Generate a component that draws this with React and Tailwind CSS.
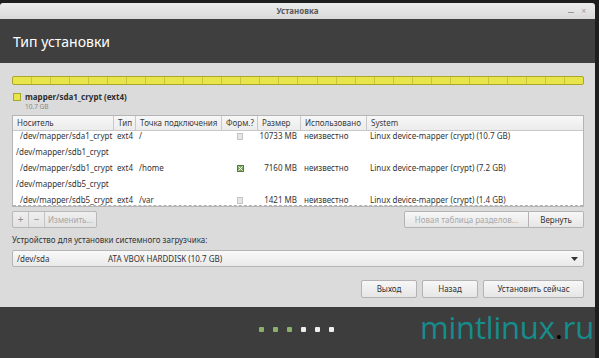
import React from 'react'

const font = { fontFamily: '"Noto Sans", "Open Sans", sans-serif' }

const cols = [
    { name: 'Носитель', w: 'w-[101px]' },
    { name: 'Тип', w: 'w-[22px]' },
    { name: 'Точка подключения', w: 'w-[86px]' },
    { name: 'Форм.?', w: 'w-[36px]' },
    { name: 'Размер', w: 'w-[43px]' },
    { name: 'Использовано', w: 'w-[66px]' },
    { name: 'System', w: 'flex-1' },
]

const rows = [
    { dev: '/dev/mapper/sda1_crypt', type: 'ext4', mount: '/', fmt: false, size: '10733 MB', used: 'неизвестно', sys: 'Linux device-mapper (crypt) (10.7 GB)' },
    { parent: '/dev/mapper/sdb1_crypt' },
    { dev: '/dev/mapper/sdb1_crypt', type: 'ext4', mount: '/home', fmt: true, size: '7160 MB', used: 'неизвестно', sys: 'Linux device-mapper (crypt) (7.2 GB)' },
    { parent: '/dev/mapper/sdb5_crypt' },
    { dev: '/dev/mapper/sdb5_crypt', type: 'ext4', mount: '/var', fmt: false, size: '1421 MB', used: 'неизвестно', sys: 'Linux device-mapper (crypt) (1.4 GB)' },
]

function Check({ on }) {
    if (on) {
        return (
            <span className="w-[7px] h-[7px] bg-[#7fa862] border border-[#567d3c] flex items-center justify-center">
                <svg width="5" height="5" viewBox="0 0 5 5">
                    <path d="M0.5 0.5 L4.5 4.5 M4.5 0.5 L0.5 4.5" stroke="#fff" strokeWidth="1" />
                </svg>
            </span>
        )
    }
    return <span className="w-[6px] h-[7px] bg-[#e6e6e6] border border-[#c4c4c4]" />
}

function Btn({ children, className = '', disabled }) {
    return (
        <div
            className={`flex items-center justify-center border border-[#b3b3b3] rounded-[2px] bg-gradient-to-b from-[#f7f7f7] to-[#e6e6e6] text-[8px] ${disabled ? 'text-[#a8a8a8]' : 'text-[#333]'} ${className}`}
        >
            {children}
        </div>
    )
}

export default function App() {
    return (
        <div className="w-[599px] h-[358px] bg-[#1e1e1e] overflow-hidden relative" style={font}>
            <div className="h-[3px]" />
            <div className="w-[595px] flex flex-col">
                {/* Title bar */}
                <div className="h-[16px] rounded-t-[3px] bg-gradient-to-b from-[#ececec] to-[#d9d9d9] flex items-center relative">
                    <span className="flex-1 text-center text-[8px] font-bold text-[#5a5a5a]">Установка</span>
                    <div className="absolute right-[9px] top-0 h-full flex items-center gap-[7px] text-[#9a9a9a] text-[8px]">
                        <span className="w-[6px] h-px bg-[#9a9a9a] mt-[2px]" />
                        <span className="leading-none">×</span>
                    </div>
                </div>

                {/* Header */}
                <div className="h-[44px] bg-[#3f3f3f] flex items-center px-[13px]">
                    <span className="text-white text-[14px]">Тип установки</span>
                </div>

                {/* Content */}
                <div className="h-[244px] bg-[#dbdbdb] pl-[12px] pr-[11px] pt-[13px] flex flex-col">
                    {/* Disk bar */}
                    <div className="h-[9px] border border-[#a9a62c] rounded-[2px] bg-[#e7e54a] flex overflow-hidden">
                        {Array.from({ length: 30 }).map((_, i) => (
                            <div key={i} className="flex-1 border-r border-[#c8c53a] last:border-r-0" />
                        ))}
                    </div>

                    {/* Legend */}
                    <div className="mt-[7px] flex items-center gap-[4px] h-[9px]">
                        <span className="w-[8px] h-[8px] bg-[#e7e54a] border border-[#a9a62c] ml-px" />
                        <span className="text-[8px] font-bold text-[#2f2f2f]">mapper/sda1_crypt (ext4)</span>
                    </div>
                    <div className="text-[6.5px] text-[#8a8a8a] pl-[13px] leading-[10px] mt-[1px]">10.7 GB</div>

                    {/* Partition table */}
                    <div className="mt-[3px] border border-[#b5b5b5] bg-white">
                        <div className="h-[15px] flex bg-gradient-to-b from-[#f7f7f7] to-[#ececec] border-b border-[#c9c9c9] text-[8px] text-[#3a3a3a]">
                            {cols.map((c, i) => (
                                <div
                                    key={c.name}
                                    className={`${c.w} flex items-center pl-[4px] whitespace-nowrap overflow-hidden ${i < cols.length - 1 ? 'border-r border-[#c9c9c9]' : ''}`}
                                >
                                    {c.name}
                                </div>
                            ))}
                        </div>
                        <div className="h-[75px] overflow-hidden border-b border-dashed border-[#b0b0b0]">
                            <div className="-mt-[3px] text-[8px] text-[#333]">
                                {rows.map((r, i) =>
                                    r.parent ? (
                                        <div key={i} className="h-[16px] flex items-center pl-[3px]">
                                            {r.parent}
                                        </div>
                                    ) : (
                                        <div key={i} className="h-[16px] flex items-center whitespace-nowrap">
                                            <div className="w-[101px] pl-[7px] overflow-hidden">{r.dev}</div>
                                            <div className="w-[22px] pl-[3px]">{r.type}</div>
                                            <div className="w-[86px] pl-[3px]">{r.mount}</div>
                                            <div className="w-[36px] flex justify-center">
                                                <Check on={r.fmt} />
                                            </div>
                                            <div className="w-[43px] text-right pr-[4px]">{r.size}</div>
                                            <div className="w-[66px] pl-[3px]">{r.used}</div>
                                            <div className="flex-1 pl-[3px]">{r.sys}</div>
                                        </div>
                                    )
                                )}
                            </div>
                        </div>
                    </div>

                    {/* Table buttons */}
                    <div className="mt-[4px] h-[17px] flex items-center">
                        <div className="flex h-full border border-[#b8b8b8] rounded-[2px] bg-gradient-to-b from-[#efefef] to-[#e2e2e2] text-[#8f8f8f]">
                            <span className="w-[16px] flex items-center justify-center text-[10px] border-r border-[#c4c4c4]">+</span>
                            <span className="w-[16px] flex items-center justify-center text-[10px] border-r border-[#c4c4c4]">−</span>
                            <span className="w-[51px] flex items-center pl-[3px] text-[8px] text-[#a6a6a6]">Изменить...</span>
                        </div>
                        <div className="flex-1" />
                        <Btn disabled className="w-[125px] h-full rounded-r-none">Новая таблица разделов...</Btn>
                        <Btn className="w-[55px] h-full rounded-l-none border-l-0">Вернуть</Btn>
                    </div>

                    {/* Bootloader */}
                    <div className="mt-[6px] text-[8px] text-[#333] leading-[11px]">
                        Устройство для установки системного загрузчика:
                    </div>
                    <div className="mt-[5px] h-[17px] border border-[#b5b5b5] rounded-[2px] bg-gradient-to-b from-[#f9f9f9] to-[#e9e9e9] flex items-center text-[8px] text-[#333]">
                        <span className="w-[95px] pl-[4px]">/dev/sda</span>
                        <span className="flex-1">ATA VBOX HARDDISK (10.7 GB)</span>
                        <svg width="7" height="4" viewBox="0 0 7 4" className="mr-[5px]">
                            <path d="M0 0 L7 0 L3.5 4 Z" fill="#333" />
                        </svg>
                    </div>

                    {/* Dialog buttons */}
                    <div className="mt-[13px] flex justify-end gap-[5px]">
                        <Btn className="w-[56px] h-[18px]">Выход</Btn>
                        <Btn className="w-[56px] h-[18px]">Назад</Btn>
                        <Btn className="w-[101px] h-[18px] border-[#9fbf82]">Установить сейчас</Btn>
                    </div>
                </div>

                {/* Slideshow footer */}
                <div className="h-[51px] bg-[#3d3d3d] flex items-center justify-center">
                    <div className="flex gap-[9px] ml-[-2px] mt-[-6px]">
                        {[0, 1, 2].map((i) => (
                            <span key={i} className="w-[5px] h-[5px] rounded-[1px] bg-[#8cb06a]" />
                        ))}
                        {[0, 1, 2].map((i) => (
                            <span key={i} className="w-[5px] h-[5px] rounded-[1px] bg-[#eeeeee]" />
                        ))}
                    </div>
                </div>
            </div>

            {/* Watermark */}
            <div
                className="absolute left-[420px] top-[312px] text-[31px] text-[#178c8c] leading-none tracking-[-0.2px]"
                style={{ fontFamily: '"Open Sans", sans-serif' }}
            >
                mintlinux<span className="text-black">.</span>ru
            </div>
        </div>
    )
}
